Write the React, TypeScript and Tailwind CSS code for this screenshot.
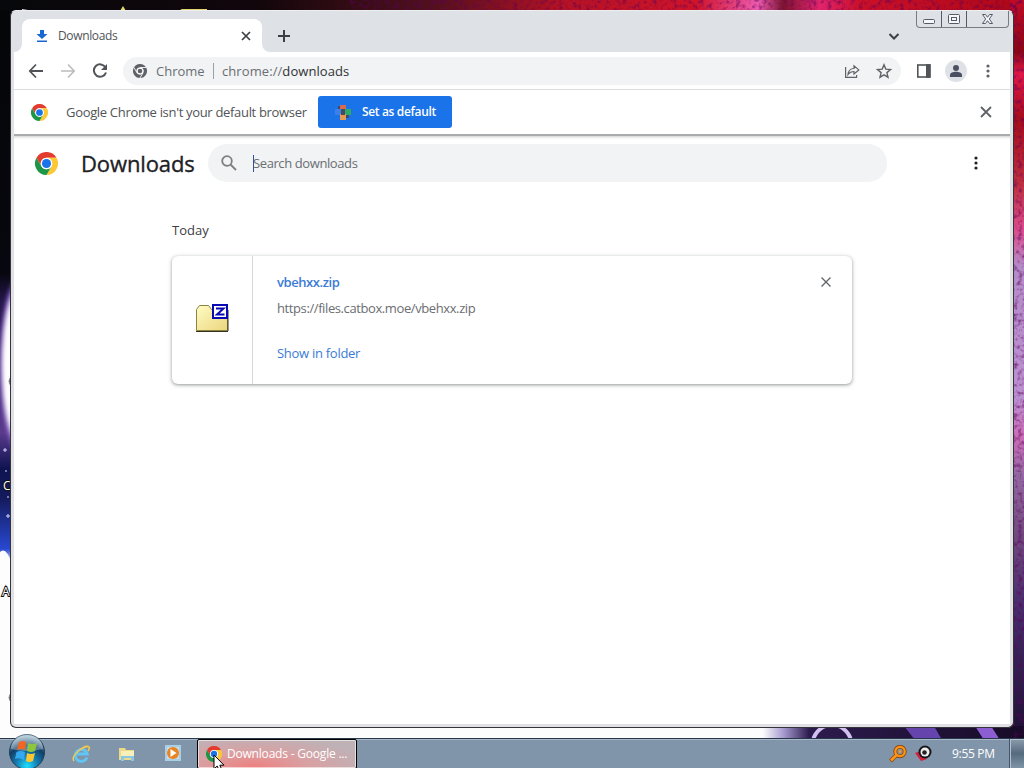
import type { ReactNode } from "react"

function ChromeLogo({ size, mono = false }: { size: number; mono?: boolean }) {
  return (
    <svg width={size} height={size} viewBox="0 0 48 48" className="shrink-0">
      <path d="M24 12H44.8A24 24 0 0 0 3.2 12L13.6 30A12 12 0 0 1 24 12z" fill={mono ? "#5f6368" : "#e33b2e"} />
      <path d="M24 12H44.8A24 24 0 0 1 24 48L34.4 30A12 12 0 0 0 24 12z" fill={mono ? "#5f6368" : "#fcc934"} />
      <path d="M34.4 30L24 48A24 24 0 0 1 3.2 12L13.6 30A12 12 0 0 0 34.4 30z" fill={mono ? "#5f6368" : "#1e9647"} />
      {mono && <path d="M24 12H45M34.4 30L24 48M13.6 30L3.2 12" stroke="#f1f3f4" strokeWidth="3" />}
      <circle cx="24" cy="24" r="12" fill="#fff" />
      <circle cx="24" cy="24" r={mono ? 8 : 9.5} fill={mono ? "#5f6368" : "#1a73e8"} />
    </svg>
  )
}

function Line({ d, size = 16, color = "#505458", width = 2, className = "" }: { d: string; size?: number; color?: string; width?: number; className?: string }) {
  return (
    <svg width={size} height={size} viewBox="0 0 16 16" fill="none" stroke={color} strokeWidth={width} className={`shrink-0 ${className}`}>
      <path d={d} />
    </svg>
  )
}

function Dots({ color }: { color: string }) {
  return (
    <svg width="16" height="16" viewBox="0 0 16 16" fill={color} className="shrink-0">
      <circle cx="8" cy="3" r="1.6" />
      <circle cx="8" cy="8" r="1.6" />
      <circle cx="8" cy="13" r="1.6" />
    </svg>
  )
}

function Wallpaper() {
  return (
    <svg className="absolute inset-0" width="1024" height="768">
      <defs>
        <linearGradient id="top">
          <stop offset="0" stopColor="#07080b" />
          <stop offset=".25" stopColor="#11060b" />
          <stop offset=".42" stopColor="#50101c" />
          <stop offset=".55" stopColor="#b51224" />
          <stop offset=".68" stopColor="#d01429" />
          <stop offset=".74" stopColor="#ee5cae" />
          <stop offset=".765" stopColor="#7c1430" />
          <stop offset=".8" stopColor="#e2256c" />
          <stop offset=".84" stopColor="#cb1028" />
          <stop offset="1" stopColor="#ad0717" />
        </linearGradient>
        <linearGradient id="right" x1="0" y1="0" x2="0" y2="1">
          <stop offset="0" stopColor="#c20b24" />
          <stop offset=".07" stopColor="#8a0715" />
          <stop offset=".1" stopColor="#e01848" />
          <stop offset=".16" stopColor="#a50c1c" />
          <stop offset=".25" stopColor="#bf3040" />
          <stop offset=".31" stopColor="#dc4c8c" />
          <stop offset=".36" stopColor="#b48cc8" />
          <stop offset=".54" stopColor="#bb90d0" />
          <stop offset=".59" stopColor="#cb6cb6" />
          <stop offset=".64" stopColor="#966ba4" />
          <stop offset=".72" stopColor="#734a80" />
          <stop offset=".82" stopColor="#482c6c" />
          <stop offset="1" stopColor="#1b1031" />
        </linearGradient>
        <linearGradient id="left" x1="0" y1="0" x2="0" y2="1">
          <stop offset="0" stopColor="#050608" />
          <stop offset=".36" stopColor="#07070f" />
          <stop offset=".4" stopColor="#24164a" />
          <stop offset=".58" stopColor="#5a3a8c" />
          <stop offset=".63" stopColor="#0e1350" />
          <stop offset=".67" stopColor="#141a5c" />
          <stop offset=".74" stopColor="#2848d0" />
          <stop offset=".76" stopColor="#fafaff" />
        </linearGradient>
        <linearGradient id="bottom">
          <stop offset="0" stopColor="#fcfcfd" />
          <stop offset=".745" stopColor="#fcfcfd" />
          <stop offset=".765" stopColor="#a79bd0" />
          <stop offset=".79" stopColor="#2d1b4e" />
          <stop offset="1" stopColor="#160b26" />
        </linearGradient>
        <filter id="grain" x="0" y="0" width="1" height="1">
          <feTurbulence type="fractalNoise" baseFrequency=".22" numOctaves="3" seed="4" result="n" />
          <feColorMatrix in="n" values="0 0 0 0 .1  0 0 0 0 0  0 0 0 0 .1  1.6 0 0 0 -.75" result="m" />
          <feComposite in="m" in2="SourceAlpha" operator="in" />
        </filter>
        <filter id="soft"><feGaussianBlur stdDeviation="2" /></filter>
      </defs>
      <rect width="1024" height="12" fill="url(#top)" />
      <rect y="11" width="12" height="727" fill="url(#left)" />
      <rect x="1010" width="14" height="740" fill="url(#right)" />
      <rect y="726" width="1024" height="14" fill="url(#bottom)" />
      <rect x="350" width="674" height="12" filter="url(#grain)" />
      <rect x="1010" y="0" width="14" height="740" filter="url(#grain)" />
      <ellipse cx="20" cy="365" rx="20" ry="88" fill="#7a55b8" filter="url(#soft)" />
      <ellipse cx="20" cy="365" rx="18" ry="78" fill="#fff" filter="url(#soft)" />
      <path d="M0 552q6-6 12 12v174H0z" fill="#fdfdfe" />
      <path d="M813 740a20 22 0 0 1 38 0" fill="none" stroke="#d2c2f1" strokeWidth="4" />
      <path d="M904 726h30l8 14h-27z" fill="#6544ad" />
      <path d="M975 726h16l9 14h-16z" fill="#8d5ed2" />
      <path d="M120 11l3-5 3 5M182 9h25v2h-29z" fill="#e5d66b" />
      <path d="M22 9l6 1v1h-6z" fill="#ddd" />
      <path d="M12 376q-6 5 0 11M12 692q-6 6 0 11" fill="#555" stroke="#888" />
      <g fontFamily="Open Sans" fontSize="12" fill="#fff" stroke="#111" strokeWidth="2" paintOrder="stroke">
        <text x="3" y="490">C</text>
        <text x="2" y="596">A</text>
      </g>
      <path d="M5 448v4M3 450h4M5 471h2M7 497h2M8 514v4M6 516h4" stroke="#cfd4ff" />
    </svg>
  )
}

function TabStrip() {
  return (
    <div className="flex h-[41px] items-end bg-[#dee1e6] pl-2">
      <div className="relative flex h-[33px] w-60 items-center rounded-t-lg bg-white pl-3">
        <svg width="16" height="16" viewBox="0 0 16 16" fill="#1967d2">
          <path d="M6 2h4v4h3.5L8 11 2.500 6H6zM3 12.500h10V14H3z" />
        </svg>
        <span className="ml-2 w-[180px] text-[12px] tracking-[-0.35px] text-[#505458]">Downloads</span>
        <Line d="M4 4l8 8M12 4l-8 8" width={1.7} color="#3c4043" />
        {/* flared feet of the active tab */}
        <svg className="absolute -left-2 bottom-0" width="8" height="8"><path d="M8 0v8H0a8 8 0 0 0 8-8z" fill="#fff" /></svg>
        <svg className="absolute -right-2 bottom-0" width="8" height="8"><path d="M0 0v8h8a8 8 0 0 1-8-8z" fill="#fff" /></svg>
      </div>
      <Line d="M8 2v12M2 8h12" className="mb-2 ml-3.5" color="#3c4043" />
      <Line d="M3.500 6l4.500 4.500L12.500 6" className="mb-2 ml-auto mr-[108px]" color="#3c4043" />
      <div className="absolute right-[4px] top-0 flex h-[17px] w-[93px] rounded-b border border-t-0 border-[#777c84]">
        <svg width="91" height="16" viewBox="0 0 91 16" fill="#f5f7fa" stroke="#555b66">
          <path d="M24.500 0v16M49.500 0v16" />
          <rect x="6.500" y="8.500" width="11" height="4" rx="1" />
          <rect x="31.500" y="3.500" width="11" height="9" rx="1" />
          <rect x="34.500" y="6.500" width="5" height="3" />
          <path d="M65.500 3.500h3l2 2.800 2-2.800h3L72.300 8l3.200 4.500h-3l-2-2.800-2 2.800h-3L68.700 8z" />
        </svg>
      </div>
    </div>
  )
}

function Toolbar() {
  return (
    <div className="flex h-[38px] items-center border-b border-[#dadce0] bg-white pl-3.5">
      <Line d="M15 8H2M8 1.500L1.800 8 8 14.500" width={1.8} />
      <Line d="M1 8h13M8 1.500L14.200 8 8 14.500" width={1.6} color="#babcbe" className="ml-4" />
      <svg className="ml-4 shrink-0" width="16" height="16" viewBox="0 0 16 16">
        <path d="M13.500 4.500A6.200 6.200 0 1 0 14 9.500" fill="none" stroke="#505458" strokeWidth="2" />
        <path d="M15 1v6H9z" fill="#505458" />
      </svg>
      <div className="ml-[15px] flex h-7 w-[778px] items-center rounded-full bg-[#f1f3f4] pl-[10px] pr-[9px] text-[13px] text-[#6a6e73]">
        <ChromeLogo size={14} mono />
        <span className="ml-[9px] w-[49px] pt-0.5">Chrome</span>
        <span className="mx-2 h-4 w-px bg-[#9aa0a6]" />
        <span className="pt-0.5 tracking-[0.08px]">chrome://<span className="text-[#303134]">downloads</span></span>
        <svg className="ml-auto" width="16" height="16" viewBox="0 0 16 16" fill="none" stroke="#5f6368" strokeWidth="1.200">
          <path d="M1.600 4v10.400h11V12M4 11.500c.5-4 2.500-6 6-6V2.800l4.800 4.100L10 11V8.500c-2.500 0-4.500 1-6 3z" />
        </svg>
        <svg className="ml-4" width="16" height="16" viewBox="0 0 16 16" fill="none" stroke="#5f6368" strokeWidth="1.400">
          <path d="M8 1.800l1.800 4.300 4.700.4-3.600 3.100 1.100 4.600L8 11.800l-4 2.400 1.100-4.600L1.500 6.500l4.700-.4z" />
        </svg>
      </div>
      <svg className="ml-[15px] shrink-0" width="16" height="16" viewBox="0 0 16 16">
        <rect x="1.800" y="2" width="12" height="12" fill="none" stroke="#505458" strokeWidth="1.600" />
        <path d="M10 1.200h4.600v13.600H10z" fill="#505458" />
      </svg>
      <svg className="ml-[13px] shrink-0" width="22" height="22" viewBox="0 0 22 22">
        <circle cx="11" cy="11" r="11" fill="#dee1e6" />
        <g fill="#4b5162"><circle cx="11" cy="8" r="3" /><path d="M5 17v-2c0-2 3-3.200 6-3.200s6 1.200 6 3.200v2z" /></g>
      </svg>
      <span className="ml-[13px]"><Dots color="#5f6368" /></span>
    </div>
  )
}

function InfoBar() {
  return (
    <div className="flex h-[46px] shrink-0 items-center border-b-2 border-[#aaabac] bg-white pl-[17px] text-[13px] text-[#505458]">
      <ChromeLogo size={17} />
      <span className="ml-[18px] w-[252px] whitespace-nowrap pt-0.5 tracking-[-0.32px]">Google Chrome isn't your default browser</span>
      <button className="flex h-8 w-[134px] items-center rounded-[3px] bg-[#1a73e8] pl-4 text-xs font-semibold text-white">
        <svg width="18" height="18" viewBox="0 0 18 18">
          <path d="M6 2h6v5H6z" fill="#d56a50" />
          <path d="M1 6h6v6H1z" fill="#3d80e8" />
          <path d="M11 6h6v6h-6z" fill="#2faa64" />
          <path d="M6 11h6v6H6z" fill="#e59a55" />
          <path d="M7 6h4v6H7zM4 3h2v3H4zM12 12h3v3h-3z" fill="#454a66" />
        </svg>
        <span className="ml-2.5 whitespace-nowrap tracking-[-0.35px]">Set as default</span>
      </button>
      <Line d="M3 3l10 10M13 3L3 13" className="ml-auto mr-4" color="#5f6368" width={1.8} />
    </div>
  )
}

function DownloadCard() {
  return (
    <div className="flex h-32 w-[680px] rounded-md bg-white shadow-[0_1px_3px_rgba(60,64,67,.4),0_1px_4px_1px_rgba(60,64,67,.15)]">
      <div className="flex w-[81px] items-center justify-center border-r border-[#d5d6d8]">
        <svg width="34" height="30" viewBox="0 0 34 30" className="-mt-[5px]">
          <defs>
            <linearGradient id="folder" x1="0" y1="0" x2="1" y2="1">
              <stop offset="0" stopColor="#fffcc4" />
              <stop offset="1" stopColor="#ead57c" />
            </linearGradient>
          </defs>
          <path d="M1.500 6.500l3-4h9l3 4h16v21h-31z" fill="url(#folder)" stroke="#8b8342" />
          <path d="M1 28.500h32M33 7v21" stroke="#35311b" fill="none" />
          <path d="M18 2h14v13H18z" fill="#fff" stroke="#0a0ab4" strokeWidth="2" />
          <path d="M21 5.500h7.500L22 11.500h7.500" fill="none" stroke="#0a0ab4" strokeWidth="2" />
        </svg>
      </div>
      <div className="flex flex-1 flex-col pl-6 pt-4 text-[13px] leading-5">
        <span className="font-semibold tracking-[-0.42px] text-[#3b7bd6]">vbehxx.zip</span>
        <span className="mt-1.5 tracking-[-0.4px] text-[#6b6e72]">https://files.catbox.moe/vbehxx.zip</span>
        <span className="mt-[25px] tracking-[-0.28px] text-[#3b7bd6]">Show in folder</span>
      </div>
      <Line d="M3.500 3.500l9 9M12.500 3.500l-9 9" className="mr-[18px] mt-[18px]" color="#5f6368" width={1.3} />
    </div>
  )
}

function DownloadsPage() {
  return (
    <div className="min-h-0 flex-1 bg-white shadow-[inset_0_3px_3px_-2px_rgba(0,0,0,.2)]">
      <div className="flex h-[54px] items-center pl-[21px]">
        <ChromeLogo size={23} />
        <h1 className="ml-[23px] w-[127px] text-[22px] font-medium tracking-[-0.12px] text-[#202124] [-webkit-text-stroke:0.35px_#202124]">Downloads</h1>
        <div className="flex h-[38px] w-[679px] items-center rounded-full bg-[#f1f3f4] pl-3 text-[13px] text-[#6a6e73]">
          <svg width="18" height="18" viewBox="0 0 18 18" fill="none" stroke="#7c8084" strokeWidth="1.800">
            <circle cx="7" cy="7" r="4.800" /><path d="M10.500 10.500l5.500 5.500" />
          </svg>
          <span className="ml-[15px] h-[17px] w-px bg-[#30509a]" />
          <span className="-ml-px pt-0.5 tracking-[-0.4px]">Search downloads</span>
        </div>
        <span className="ml-[81px]"><Dots color="#202124" /></span>
      </div>
      <div className="pl-[158px] pt-[30px]">
        <h2 className="text-[13px] leading-5 text-[#3c4043]">Today</h2>
        <div className="mt-4"><DownloadCard /></div>
      </div>
    </div>
  )
}

function QuickLaunch({ children }: { children: ReactNode }) {
  return <div className="flex w-[46px] shrink-0 justify-center">{children}</div>
}

function Taskbar() {
  return (
    <div className="absolute inset-x-0 bottom-0 flex h-[30px] items-center border-t border-[#28384b] bg-[#8195aa] text-white shadow-[inset_0_1px_0_#a9b8c9]">
      <svg className="-mt-[3px] ml-2 shrink-0 overflow-visible" width="38" height="38" viewBox="0 0 38 38">
        <defs>
          <radialGradient id="orb" cx=".5" cy=".9" r=".85">
            <stop offset="0" stopColor="#1fe0ff" />
            <stop offset=".35" stopColor="#1580b5" />
            <stop offset=".7" stopColor="#123e66" />
            <stop offset="1" stopColor="#9cbccd" />
          </radialGradient>
        </defs>
        <circle cx="19" cy="19" r="17.500" fill="url(#orb)" stroke="#203e58" />
        <path d="M3 16A16 15 0 0 1 35 16Q19 20 3 16z" fill="#fff" opacity=".3" />
        <path d="M11 9q4-2 7 0l-1 8q-4-2-8 0z" fill="#f26522" />
        <path d="M20 10q4 2 9 0l-2 8q-4 2-8 0z" fill="#8cc63f" />
        <path d="M8.500 19q4-2 8.500 0l-1 8q-5-3-9-1z" fill="#35a9ef" />
        <path d="M19 20q4 2 8 0l-2 8q-4 2-7 0z" fill="#fdc72f" />
      </svg>
      <div className="ml-3 flex">
        <QuickLaunch>
          <svg width="18" height="18" viewBox="0 0 18 18" fill="none">
            <path d="M15 12.500A6 6 0 1 1 15.200 9H5" stroke="#62c6f5" strokeWidth="2.800" />
            <path d="M2 16C-2 11 13-1 17 2q1 1-1 4" stroke="#f3cb4d" strokeWidth="1.500" />
          </svg>
        </QuickLaunch>
        <QuickLaunch>
          <svg width="18" height="18" viewBox="0 0 18 18">
            <path d="M1 3h6l1 2h8v10H1z" fill="#edd98a" />
            <path d="M3 6h13v5H3z" fill="#f8efb9" />
            <path d="M3 16v-5h13v5h-3v-3H6v3z" fill="#8cc7e6" />
          </svg>
        </QuickLaunch>
        <QuickLaunch>
          <svg width="16" height="16" viewBox="0 0 16 16">
            <path d="M1 1h14v14H1z" fill="#c9dbe4" stroke="#a9cfe6" strokeWidth="2" />
            <circle cx="8" cy="8" r="6" fill="#e98422" />
            <path d="M5.500 4L11.500 8l-6 4z" fill="#fff" />
          </svg>
        </QuickLaunch>
      </div>
      <div className="ml-px flex h-[30px] w-[160px] items-center rounded-[2px] border border-black bg-[radial-gradient(ellipse_at_35%_95%,#ee8080_0%,#d9a0a2_38%,#beb2b7_80%)] pl-2 shadow-[inset_0_0_0_1px_rgba(255,255,255,.6)]">
        <ChromeLogo size={16} />
        <span className="ml-[5px] whitespace-nowrap text-[12px] tracking-[-0.2px]">Downloads - Google ...</span>
      </div>
      <svg className="ml-auto" width="18" height="18" viewBox="0 0 18 18" fill="none">
        <circle cx="11" cy="6.500" r="4.700" stroke="#8a4a12" strokeWidth="4" />
        <path d="M7.500 10L1.500 16" stroke="#8a4a12" strokeWidth="4" />
        <circle cx="11" cy="6.500" r="4.700" stroke="#ff9417" strokeWidth="2.200" />
        <path d="M7.500 10L2 15.500" stroke="#ff9417" strokeWidth="2.600" />
        <circle cx="11" cy="6.500" r="1.300" fill="#ff9417" />
      </svg>
      <svg className="ml-2" width="17" height="17" viewBox="0 0 17 17">
        <path d="M0 8l6 8 6-2-6-8z" fill="#d51f3c" />
        <circle cx="10" cy="7" r="6.500" fill="#17171b" />
        <circle cx="10" cy="7" r="4.500" fill="#eee" />
        <circle cx="9.500" cy="7.500" r="2.300" fill="#222" />
      </svg>
      <span className="ml-5 w-[43px] whitespace-nowrap text-[12px] tracking-[-0.3px]">9:55 PM</span>
      <div className="ml-[14px] h-full w-[15px] border-l border-[#43566c] bg-linear-to-b from-[#8b9bac] via-[#566b7e] to-[#8094a8] shadow-[inset_1px_1px_0_#b4c0cd]" />
    </div>
  )
}

export default function App() {
  return (
    <div className="relative h-[768px] w-[1024px] overflow-hidden bg-white font-['Open_Sans','Noto_Sans',sans-serif]">
      <Wallpaper />
      <div className="absolute left-[10px] top-[10px] flex h-[718px] w-[1004px] flex-col rounded-md border border-[#34363c] border-t-[#eceef0] bg-[#e1e1e5] pb-[3px] pl-[3px] pr-[3px]">
        <TabStrip />
        <Toolbar />
        <InfoBar />
        <DownloadsPage />
      </div>
      <Taskbar />
      <svg className="absolute left-[213px] top-[754px]" width="13" height="20" viewBox="0 0 13 20">
        <path d="M1 1v14l3.200-3 3 7 2.600-1.200-3-6.600H11z" fill="#fff" stroke="#000" />
      </svg>
    </div>
  )
}
